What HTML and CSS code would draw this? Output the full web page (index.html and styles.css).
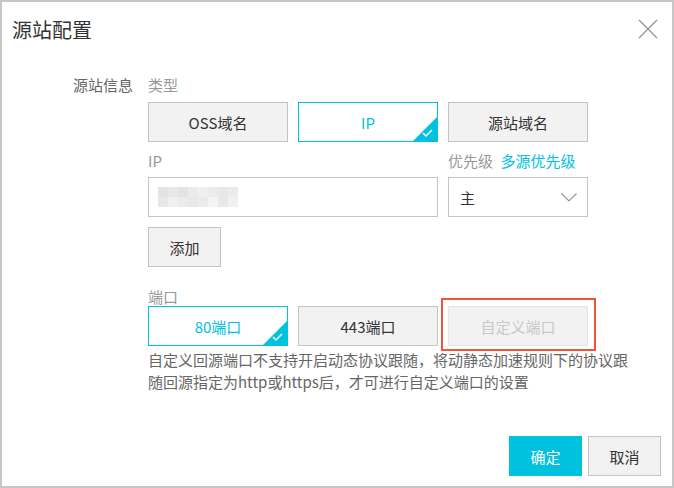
FILE: index.html
```html
<!DOCTYPE html>
<html lang="zh">
<head>
    <meta charset="UTF-8">
    <meta name="viewport" content="width=device-width, initial-scale=1.0">
    <title>源站配置</title>
    <link rel="stylesheet" href="styles.css">
</head>
<body>
    <div class="dialog">
        <div class="dialog-header">
            <h2 class="dialog-title">源站配置</h2>
            <button class="dialog-close" aria-label="关闭">
                <svg width="20" height="20" viewBox="0 0 20 20">
                    <path d="M1 1 L19 19 M19 1 L1 19" stroke="#999" stroke-width="1.4" fill="none"/>
                </svg>
            </button>
        </div>

        <div class="dialog-body">
            <div class="form-label">源站信息</div>
            <div class="form-content">
                <div class="field-label">类型</div>
                <div class="option-group">
                    <button class="option">OSS域名</button>
                    <button class="option selected">IP
                        <svg class="corner" width="24" height="24" viewBox="0 0 24 24">
                            <path d="M24 0 L24 24 L0 24 Z" fill="#00c1de"/>
                            <path d="M10 16 L13 19 L19 13" stroke="#fff" stroke-width="1.5" fill="none"/>
                        </svg>
                    </button>
                    <button class="option">源站域名</button>
                </div>

                <div class="ip-row">
                    <div class="ip-col">
                        <div class="field-label">IP</div>
                        <div class="input">
                            <div class="mosaic">
                                <span class="c1"></span><span class="c2"></span><span class="c1"></span><span class="c3"></span>
                                <span class="c4"></span><span class="c3"></span><span class="c2"></span><span class="c3"></span>
                                <span class="c2"></span><span class="c4"></span><span class="c3"></span><span class="c2"></span>
                                <span class="c3"></span><span class="c5"></span><span class="c2"></span><span class="c4"></span>
                            </div>
                        </div>
                    </div>
                    <div class="priority-col">
                        <div class="field-label">优先级 <a class="link" href="#">多源优先级</a></div>
                        <div class="select">
                            <span>主</span>
                            <svg width="16" height="9" viewBox="0 0 16 9">
                                <path d="M0.5 0.5 L8 8 L15.5 0.5" stroke="#999" stroke-width="1.2" fill="none"/>
                            </svg>
                        </div>
                    </div>
                </div>

                <button class="btn add-btn">添加</button>

                <div class="field-label port-label">端口</div>
                <div class="option-group port-group">
                    <button class="option selected">80端口
                        <svg class="corner" width="24" height="24" viewBox="0 0 24 24">
                            <path d="M24 0 L24 24 L0 24 Z" fill="#00c1de"/>
                            <path d="M10 16 L13 19 L19 13" stroke="#fff" stroke-width="1.5" fill="none"/>
                        </svg>
                    </button>
                    <button class="option">443端口</button>
                    <div class="marked">
                        <button class="option" disabled>自定义端口</button>
                    </div>
                </div>
                <p class="hint">自定义回源端口不支持开启动态协议跟随，将动静态加速规则下的协议跟随回源指定为http或https后，才可进行自定义端口的设置</p>
            </div>
        </div>

        <div class="dialog-footer">
            <button class="btn btn-primary">确定</button>
            <button class="btn">取消</button>
        </div>
    </div>
</body>
</html>
```

FILE: styles.css
```css
* {
    box-sizing: border-box;
}

body {
    margin: 0;
    font-family: "Noto Sans CJK SC", "Noto Sans", sans-serif;
    font-size: 15px;
    color: #333;
    background: #fff;
}

button {
    font-family: inherit;
    font-size: 15px;
}

.dialog {
    width: 674px;
    height: 488px;
    border: 2px solid #c6c6c6;
    display: flex;
    flex-direction: column;
}

.dialog-header {
    display: flex;
    justify-content: space-between;
    align-items: flex-start;
    padding: 14px 14px 0 10px;
}

.dialog-title {
    margin: 0;
    font-size: 20px;
    font-weight: normal;
    line-height: 28px;
    color: #333;
}

.dialog-close {
    border: none;
    background: none;
    padding: 0;
    margin-top: 3px;
    cursor: pointer;
}

.dialog-close svg {
    display: block;
}

.dialog-body {
    display: flex;
    gap: 15px;
    padding: 31px 0 0 71px;
}

.form-label {
    width: 60px;
    line-height: 20px;
    color: #666;
    text-align: right;
}

.form-content {
    width: 490px;
}

.field-label {
    line-height: 20px;
    color: #999;
}

.link {
    color: #00c1de;
    text-decoration: none;
    margin-left: 4px;
}

.option-group {
    display: flex;
    gap: 10px;
    margin-top: 7px;
}

.option {
    position: relative;
    width: 140px;
    height: 40px;
    border: 1px solid #c4c4c4;
    background: #f2f2f2;
    color: #333;
    padding: 0;
}

.option.selected {
    background: #fff;
    border-color: #00c1de;
    color: #00c1de;
}

.option .corner {
    position: absolute;
    right: 0;
    bottom: 0;
    display: block;
}

.option:disabled {
    border-color: #e4e4e4;
    color: #c8c8c8;
}

.marked {
    position: relative;
}

.marked::after {
    content: "";
    position: absolute;
    left: -7px;
    right: -8px;
    top: -8px;
    bottom: -5px;
    border: 2px solid #f0553c;
}

.ip-row {
    display: flex;
    gap: 10px;
    margin-top: 9px;
}

.ip-col {
    width: 290px;
}

.priority-col {
    width: 140px;
}

.input,
.select {
    height: 40px;
    margin-top: 6px;
    border: 1px solid #c4c4c4;
    background: #fff;
}

.input {
    padding: 9px 0 0 9px;
}

.mosaic {
    display: grid;
    grid-template-columns: repeat(8, 10px);
    grid-auto-rows: 10px;
}

.mosaic .c1 { background: #e3e3e3; }
.mosaic .c2 { background: #e8e8e8; }
.mosaic .c3 { background: #ebebeb; }
.mosaic .c4 { background: #f0f0f0; }
.mosaic .c5 { background: #f4f4f4; }

.select {
    display: flex;
    justify-content: space-between;
    align-items: center;
    padding: 0 10px 0 11px;
    color: #333;
}

.select svg {
    display: block;
    margin-top: 1px;
}

.btn {
    height: 40px;
    width: 73px;
    border: 1px solid #c4c4c4;
    background: #f2f2f2;
    color: #333;
    padding: 0;
    cursor: pointer;
}

.add-btn {
    display: block;
    margin-top: 10px;
}

.port-label {
    line-height: 18px;
    margin-top: 21px;
}

.option-group.port-group {
    margin-top: 0;
}

.hint {
    margin: 3px 0 0;
    line-height: 22px;
    color: #666;
    width: 485px;
}

.dialog-footer {
    margin-top: auto;
    display: flex;
    justify-content: flex-end;
    gap: 6px;
    padding: 0 11px 10px 0;
}

.btn-primary {
    background: #00c1de;
    border-color: #00c1de;
    color: #fff;
}
```
